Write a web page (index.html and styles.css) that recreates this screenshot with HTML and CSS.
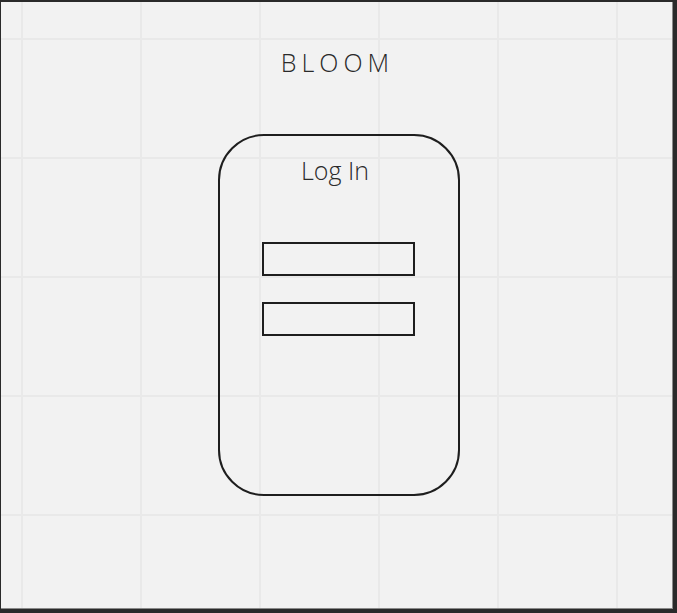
FILE: index.html
```html
<!DOCTYPE html>
<html>
<head>
<meta charset="utf-8">
<link rel="stylesheet" href="styles.css">
</head>
<body>
<div class="canvas">
  <div class="brand">BLOOM</div>
  <div class="card">
    <div class="card-title">Log In</div>
    <div class="fields">
      <input class="field" type="text" aria-label="Username">
      <input class="field" type="password" aria-label="Password">
    </div>
  </div>
</div>
</body>
</html>
```
FILE: styles.css
```css
html, body {
  margin: 0;
  padding: 0;
  background: #2a2a2a;
  width: 677px;
  height: 613px;
  overflow: hidden;
}
body {
  font-family: "Open Sans", "Liberation Sans", sans-serif;
  font-weight: 350;
  color: #2a2a2a;
  padding: 2px 0 0 1px;
  box-sizing: border-box;
}
.canvas {
  width: 672px;
  height: 607px;
  background-color: #f2f2f2;
  background-image:
    linear-gradient(to right, #e9e9e9 2px, transparent 2px),
    linear-gradient(to bottom, #e9e9e9 2px, transparent 2px);
  background-size: 119px 119px;
  background-position: 20px 36px;
  box-shadow: inset -1px -1px 0 #8a8a8a;
  display: flex;
  flex-direction: column;
  box-sizing: border-box;
  padding-top: 44px;
}
.brand {
  font-size: 25px;
  line-height: 32px;
  letter-spacing: 5px;
  text-align: center;
  padding-left: 5px;
  width: 677px;
  margin-left: -7px;
}
.card {
  margin-top: 56px;
  margin-left: 217px;
  width: 242px;
  height: 362px;
  box-sizing: border-box;
  border: 2px solid #1e1e1e;
  border-radius: 46px;
  display: flex;
  flex-direction: column;
  padding-top: 18px;
}
.card-title {
  font-size: 25px;
  line-height: 32px;
  text-align: center;
  margin-left: -8px;
}
.fields {
  display: flex;
  flex-direction: column;
  gap: 26px;
  margin-top: 56px;
  padding-left: 42px;
}
.field {
  width: 153px;
  height: 34px;
  box-sizing: border-box;
  border: 2px solid #1e1e1e;
  background: transparent;
  margin: 0;
  padding: 0 6px;
  outline: none;
  font-family: inherit;
}
```
